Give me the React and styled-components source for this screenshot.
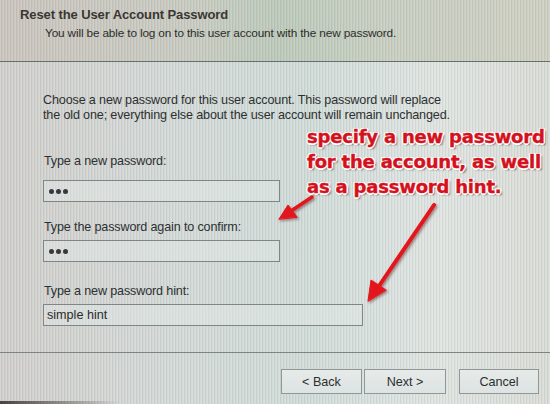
import React from "react";
import styled, { createGlobalStyle } from "styled-components";

const Global = createGlobalStyle`
  html, body { margin: 0; padding: 0; }
  body {
    width: 550px; height: 404px; overflow: hidden;
    font-family: "Liberation Sans", Arial, sans-serif;
    background: #d6dbd8;
  }
`;

const Screen = styled.div`
  position: relative;
  width: 550px;
  height: 404px;
  overflow: hidden;
  color: #2a2d2c;
  background:
    repeating-linear-gradient(90deg, rgba(255,255,255,0.14) 0 1px, rgba(0,0,0,0.05) 1px 2px, rgba(255,255,255,0.0) 2px 3px),
    linear-gradient(90deg, #d1cfcc 0%, #d3d9d7 30%, #d0dbd8 55%, #dfe4e1 80%, #d9dcd6 100%);
  display: flex;
  flex-direction: column;
`;

const Header = styled.div`
  height: 62px;
  box-sizing: border-box;
  padding: 7px 0 0 20px;
  border-bottom: 1px solid #66706a;
  background:
    repeating-linear-gradient(90deg, rgba(255,255,255,0.1) 0 1px, rgba(0,0,0,0.05) 1px 2px, rgba(255,255,255,0) 2px 3px),
    linear-gradient(90deg, #cbc5bf 0%, #c9ccc2 35%, #bdcabb 50%, #c8cfc2 70%, #cfd0c3 100%);
`;

const Title = styled.div`
  font-weight: bold;
  font-size: 13px;
  line-height: 16px;
  color: #3a3633;
  letter-spacing: -0.1px;
`;

const Subtitle = styled.div`
  font-size: 11.8px;
  line-height: 15px;
  margin: 3px 0 0 25px;
  color: #2c2d2a;
  letter-spacing: -0.15px;
`;

const Body = styled.div`
  flex: 1;
  padding: 31px 0 0 43px;
  box-sizing: border-box;
  border-bottom: 1px solid #7c8582;
`;

const Intro = styled.p`
  margin: 0;
  font-size: 12.6px;
  line-height: 15px;
  color: #2e3030;
  letter-spacing: -0.15px;
`;

const Field = styled.div`
  display: flex;
  flex-direction: column;
  margin-top: ${(p) => p.$top}px;
`;

const Label = styled.label`
  font-size: 12.6px;
  line-height: 15px;
  margin-left: 1px;
  color: #2e3030;
  letter-spacing: -0.15px;
`;

const Input = styled.div`
  margin-top: ${(p) => p.$gap}px;
  width: ${(p) => p.$w}px;
  height: 22px;
  box-sizing: border-box;
  border: 1px solid #7d8886;
  background: rgba(226, 232, 230, 0.5);
  display: flex;
  align-items: center;
  padding-left: 3px;
  font-size: 12.6px;
  color: #2a2c2b;
`;

const Dots = styled.span`
  display: flex;
  gap: 2px;
  margin-left: 2px;
`;

const Dot = styled.span`
  width: 5px;
  height: 5px;
  border-radius: 50%;
  background: #35393a;
`;

const Footer = styled.div`
  height: 51px;
  display: flex;
  align-items: flex-start;
  justify-content: flex-end;
  padding: 16px 11px 0 0;
  box-sizing: border-box;
`;

const Button = styled.div`
  width: ${(p) => p.$w}px;
  height: 25px;
  box-sizing: border-box;
  margin-left: ${(p) => p.$ml}px;
  border: 1px solid #8f9896;
  background: linear-gradient(#e6ebea, #dde3e2);
  display: flex;
  align-items: center;
  justify-content: center;
  font-size: 12.6px;
  color: #2c2e2e;
`;

const Bezel = styled.div`
  position: absolute;
  left: 0;
  bottom: 0;
  width: 120px;
  height: 3px;
  background: linear-gradient(90deg, #4a4440, rgba(80,75,70,0));
`;

const Note = styled.div`
  position: absolute;
  left: 307px;
  top: 124px;
  font-family: "DejaVu Sans", Verdana, sans-serif;
  font-weight: bold;
  font-size: 18px;
  line-height: 25px;
  color: #d4121e;
  letter-spacing: -0.2px;
  white-space: nowrap;
  -webkit-text-stroke: 0.4px #d4121e;
  text-shadow:
    -1px -1px 0 #fff, 1px -1px 0 #fff, -1px 1px 0 #fff, 1px 1px 0 #fff,
    0 -1.5px 0 #fff, 0 1.5px 0 #fff, -1.5px 0 0 #fff, 1.5px 0 0 #fff,
    2px 2px 2px rgba(60, 20, 20, 0.6);
`;

const Arrows = styled.svg`
  position: absolute;
  left: 0;
  top: 0;
  pointer-events: none;
`;

export default function App() {
  return (
    <>
      <Global />
      <Screen>
        <Header>
          <Title>Reset the User Account Password</Title>
          <Subtitle>You will be able to log on to this user account with the new password.</Subtitle>
        </Header>
        <Body>
          <Intro>
            Choose a new password for this user account. This password will replace
            <br />
            the old one; everything else about the user account will remain unchanged.
          </Intro>
          <Field $top={31}>
            <Label>Type a new password:</Label>
            <Input $w={237} $gap={11}>
              <Dots><Dot /><Dot /><Dot /></Dots>
            </Input>
          </Field>
          <Field $top={18}>
            <Label>Type the password again to confirm:</Label>
            <Input $w={237} $gap={5}>
              <Dots><Dot /><Dot /><Dot /></Dots>
            </Input>
          </Field>
          <Field $top={22}>
            <Label>Type a new password hint:</Label>
            <Input $w={320} $gap={5}>simple hint</Input>
          </Field>
        </Body>
        <Footer>
          <Button $w={81} $ml={0}>&lt; Back</Button>
          <Button $w={82} $ml={2}>Next &gt;</Button>
          <Button $w={80} $ml={13}>Cancel</Button>
        </Footer>
        <Bezel />
        <Note>
          specify a new password
          <br />
          for the account, as well
          <br />
          as a password hint.
        </Note>
        <Arrows width="550" height="404" viewBox="0 0 550 404">
          <defs>
            <filter id="sh" x="-30%" y="-30%" width="160%" height="160%">
              <feDropShadow dx="1.5" dy="1.5" stdDeviation="1" floodColor="#502020" floodOpacity="0.5" />
            </filter>
          </defs>
          <g filter="url(#sh)" fill="#e3141c" stroke="#e3141c" strokeLinecap="round" strokeLinejoin="round">
            <line x1="312" y1="197" x2="291" y2="211" strokeWidth="3.5" />
            <path d="M279 219 L288 205 L297 217 Z" strokeWidth="1" />
            <line x1="434" y1="205" x2="379" y2="286" strokeWidth="4" />
            <path d="M368 301 L371 280 L386 290 Z" strokeWidth="1" />
          </g>
        </Arrows>
      </Screen>
    </>
  );
}
